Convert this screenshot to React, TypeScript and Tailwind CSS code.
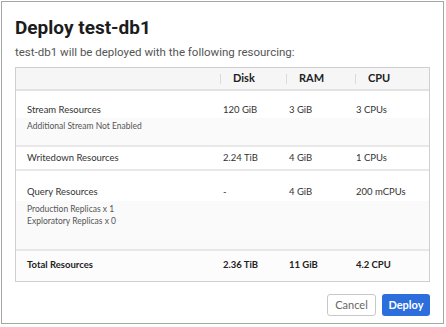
const rows = [
  {
    name: "Stream Resources",
    disk: "120 GiB",
    ram: "3 GiB",
    cpu: "3 CPUs",
    details: ["Additional Stream Not Enabled"],
    main: "h-[27px] pt-[12px]",
    detailHeight: "h-[27px]",
  },
  {
    name: "Writedown Resources",
    disk: "2.24 TiB",
    ram: "4 GiB",
    cpu: "1 CPUs",
    details: [],
    main: "h-[22px] pt-[4px]",
    detailHeight: "",
  },
  {
    name: "Query Resources",
    disk: "-",
    ram: "4 GiB",
    cpu: "200 mCPUs",
    details: ["Production Replicas x 1", "Exploratory Replicas x 0"],
    main: "h-[30px] pt-[14px]",
    detailHeight: "h-[48px]",
  },
];

function HeaderCell({ label }: { label: string }) {
  return (
    <div className="relative flex items-center pl-[13px]">
      <span className="absolute left-0 top-[6px] h-[10px] w-px bg-[#dcdcdc]" />
      <span className="font-bold text-[11px] text-[#222]">{label}</span>
    </div>
  );
}

export default function App() {
  return (
    <div className="w-[446px] h-[327px] bg-white p-px font-['Lato',sans-serif]">
      <div className="w-[443px] h-[323px] border border-[#a6a6a6] flex flex-col px-[13px] pt-[14px]">
        {/* title */}
        <h1 className="font-['Roboto',sans-serif] font-bold text-[19px] leading-[24px] text-[#1c1c1c]">
          Deploy test-db1
        </h1>
        <p className="mt-[4px] font-['Roboto',sans-serif] text-[11.5px] leading-[16px] text-[#555]">
          test-db1 will be deployed with the following resourcing:
        </p>

        {/* resources table */}
        <div className="mt-[7px] border border-[#cfcfcf] text-[9.5px] text-[#333]">
          <div className="grid grid-cols-[204px_66px_69px_1fr] h-[23px] bg-[#f6f6f6] border-b-2 border-[#e2e2e2]">
            <div />
            <HeaderCell label="Disk" />
            <HeaderCell label="RAM" />
            <HeaderCell label="CPU" />
          </div>

          {rows.map((r) => (
            <div key={r.name} className="border-b-2 border-[#e8e8e8]">
              <div className={`grid grid-cols-[204px_66px_69px_1fr] leading-[14px] ${r.main}`}>
                <div className="pl-[11px]">{r.name}</div>
                <div className="pl-[3px]">{r.disk}</div>
                <div className="pl-[3px]">{r.ram}</div>
                <div className="pl-[1px]">{r.cpu}</div>
              </div>
              {r.details.length > 0 && (
                <div className={`bg-[#fafafa] pt-[2px] pl-[11px] ${r.detailHeight}`}>
                  {r.details.map((d) => (
                    <div key={d} className="text-[8.5px] leading-[12px] text-[#555]">
                      {d}
                    </div>
                  ))}
                </div>
              )}
            </div>
          ))}

          <div className="grid grid-cols-[204px_66px_69px_1fr] h-[30px] pt-[7px] leading-[14px] font-bold text-[#222] bg-[#fcfcfc]">
            <div className="pl-[11px]">Total Resources</div>
            <div className="pl-[3px]">2.36 TiB</div>
            <div className="pl-[3px]">11 GiB</div>
            <div className="pl-[1px]">4.2 CPU</div>
          </div>
        </div>

        {/* actions */}
        <div className="mt-[12px] flex justify-end gap-[6px]">
          <button className="w-[49px] h-[22px] rounded-[3px] border border-[#c8c8c8] bg-white text-[11px] text-[#666]">
            Cancel
          </button>
          <button className="w-[48px] h-[22px] rounded-[3px] bg-[#2c6fdc] text-[11px] font-bold text-white">
            Deploy
          </button>
        </div>
      </div>
    </div>
  );
}
